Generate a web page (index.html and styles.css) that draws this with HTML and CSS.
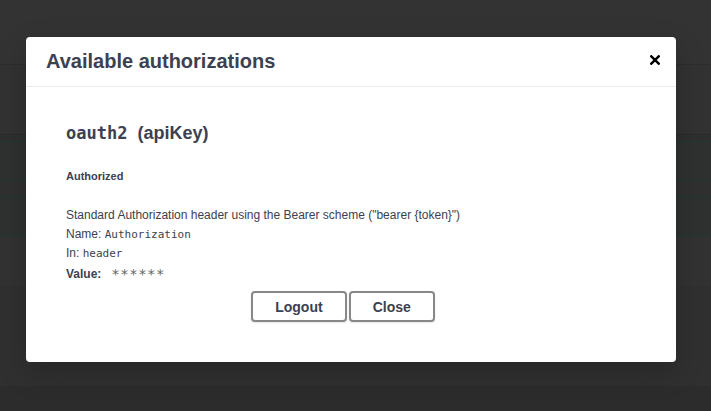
FILE: index.html
```html
<!DOCTYPE html>
<html>
<head>
<meta charset="utf-8">
<link rel="stylesheet" href="styles.css">
</head>
<body>
<div class="page">
  <div class="band b1"></div>
  <div class="band b2"></div>
  <div class="band b3"></div>
  <div class="band b4"></div>
  <div class="band b5"></div>
  <div class="band b6"></div>
  <div class="band b7"></div>
  <div class="band b8"></div>
  <div class="band b9"></div>
</div>
<div class="modal">
  <div class="modal-header">
    <h3 class="modal-title">Available authorizations</h3>
    <button class="close-x" type="button">
      <svg width="10" height="10" viewBox="0 0 10 10"><path d="M1.3 1.3 L8.7 8.7 M8.7 1.3 L1.3 8.7" stroke="#000" stroke-width="2.4" stroke-linecap="square"/></svg>
    </button>
  </div>
  <div class="modal-body">
    <h4 class="scheme"><code>oauth2</code>&nbsp; (apiKey)</h4>
    <h6 class="authorized">Authorized</h6>
    <p class="desc">Standard Authorization header using the Bearer scheme ("bearer {token}")</p>
    <p class="row">Name: <code>Authorization</code></p>
    <p class="row">In: <code>header</code></p>
    <div class="row value"><label>Value:</label><code class="stars">******</code></div>
    <div class="btns">
      <button class="btn" type="button">Logout</button>
      <button class="btn btn-done" type="button">Close</button>
    </div>
  </div>
</div>
</body>
</html>
```
FILE: styles.css
```css
html, body { margin: 0; padding: 0; }
body {
  width: 711px;
  height: 411px;
  overflow: hidden;
  background: #2d2d2d;
  font-family: "Liberation Sans", Arial, sans-serif;
  position: relative;
}
.page { display: flex; flex-direction: column; }
.band { width: 100%; box-sizing: border-box; flex: none; }
.b1 { height: 65px; background: #333333; border-bottom: 1px solid #2c2c2c; }
.b2 { height: 70px; background: #323232; border-bottom: 1px solid #2a2a2a; }
.b3 { height: 6px; background: #2f2f2f; }
.b4 { height: 40px; background: #2f3130; border-top: 1px solid #1d3a2c; border-bottom: 1px solid #1d3a2c; }
.b5 { height: 15px; background: #303030; }
.b6 { height: 40px; background: #2f3130; border-top: 1px solid #1d3a2c; border-bottom: 1px solid #1d3a2c; }
.b7 { height: 50px; background: #323232; }
.b8 { height: 100px; background: #303030; }
.b9 { height: 25px; background: #2c2c2c; }

.modal {
  position: absolute;
  left: 26px;
  top: 37px;
  width: 650px;
  height: 325px;
  background: #fff;
  border-radius: 4px;
  box-shadow: 0 10px 30px rgba(0,0,0,0.2);
  box-sizing: border-box;
  display: flex;
  flex-direction: column;
}
.modal-header {
  height: 50px;
  box-sizing: border-box;
  border-bottom: 1px solid #ebebeb;
  display: flex;
  align-items: center;
  justify-content: space-between;
  padding: 0 16px 0 20px;
}
.modal-title {
  margin: 0;
  font-size: 20px;
  font-weight: 700;
  color: #3b4151;
}
.close-x {
  border: 0;
  background: none;
  padding: 0;
  width: 10px;
  height: 10px;
  display: flex;
  margin-top: -3px;
}
.modal-body {
  padding: 34px 40px 0 40px;
  color: #3b4151;
}
.scheme {
  margin: 0;
  font-size: 18px;
  font-weight: 600;
  line-height: 24px;
  color: #3b4151;
}
.scheme code {
  font-family: "DejaVu Sans Mono", monospace;
  font-size: 17px;
  font-weight: 700;
}
.authorized {
  margin: 23px 0 0 0;
  font-size: 11px;
  font-weight: 700;
  line-height: 16px;
}
.desc {
  margin: 22px 0 0 0;
  font-size: 12px;
  line-height: 19px;
}
.row {
  margin: 0;
  font-size: 12px;
  line-height: 19px;
}
.row code {
  font-family: "DejaVu Sans Mono", monospace;
  font-size: 11px;
}
.value {
  display: flex;
  align-items: center;
  line-height: 21px;
  margin-top: 1px;
}
.value label { font-weight: 700; margin-right: 10px; }
.value .stars { font-size: 14px; color: #666; letter-spacing: 0.5px; }
.btns {
  display: flex;
  justify-content: center;
  gap: 2px;
  margin-top: 6px;
  padding-right: 16px;
}
.btn {
  font-family: "Liberation Sans", Arial, sans-serif;
  font-size: 14px;
  font-weight: 700;
  color: #3b4151;
  background: #fff;
  border: 2px solid #888;
  border-radius: 4px;
  box-shadow: 0 1px 2px rgba(0,0,0,0.1);
  height: 31px;
  padding: 0 22px;
}
.btn-done { padding: 0 22px; }
```
